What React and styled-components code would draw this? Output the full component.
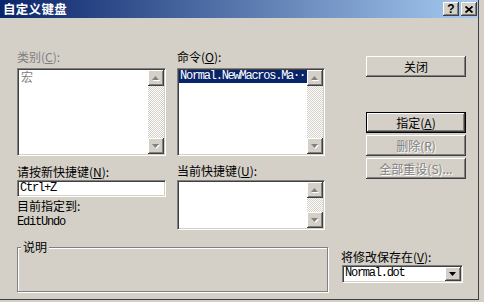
import React from "react";
import styled, { createGlobalStyle } from "styled-components";

const GlobalStyle = createGlobalStyle`
  html, body {
    margin: 0;
    padding: 0;
    background: #d4d0c8;
  }
  body {
    font-family: "Noto Sans CJK SC", "Liberation Sans", sans-serif;
    font-size: 12px;
    color: #000;
  }
`;

const Dialog = styled.div`
  width: 478px;
  height: 299px;
  background: #d4d0c8;
  border-right: 1px solid #404040;
  border-bottom: 1px solid #404040;
  display: flex;
  flex-direction: column;
  overflow: hidden;
`;

const TitleBar = styled.div`
  height: 18px;
  display: flex;
  align-items: center;
  padding: 0 1px 0 3px;
  background: linear-gradient(to right, #0a246a, #a6caf0);
`;

const Title = styled.div`
  flex: 1;
  color: #fff;
  font-weight: bold;
  font-size: 12.5px;
  letter-spacing: 0.3px;
  line-height: 18px;
`;

const CaptionButton = styled.div`
  width: 16px;
  height: 14px;
  margin-left: 2px;
  display: flex;
  align-items: center;
  justify-content: center;
  background: #d4d0c8;
  box-shadow: inset -1px -1px #404040, inset 1px 1px #fff, inset -2px -2px #808080;
  font: bold 12px "Liberation Sans", sans-serif;
  line-height: 14px;
`;

const Body = styled.div`
  flex: 1;
  display: flex;
  flex-direction: column;
  padding: 32px 0 0 17px;
`;

const Top = styled.div`
  display: flex;
  height: 180px;
`;

const Column = styled.div`
  width: ${(p) => p.$w}px;
  margin-right: ${(p) => p.$mr || 0}px;
  margin-left: ${(p) => p.$ml || 0}px;
  display: flex;
  flex-direction: column;
`;

const Label = styled.div`
  height: 14px;
  line-height: 14px;
  white-space: nowrap;
  margin-top: ${(p) => p.$mt || 0}px;
  color: ${(p) => (p.$disabled ? "#808080" : "#000")};
`;

const Mono = styled.div`
  font-family: "Liberation Mono", monospace;
  font-size: 12px;
  letter-spacing: -1.2px;
  line-height: ${(p) => p.$lh || 14}px;
  margin-top: ${(p) => p.$mt || 0}px;
  padding-left: ${(p) => p.$pl || 0}px;
  white-space: nowrap;
`;

const Sunken = styled.div`
  box-sizing: border-box;
  width: ${(p) => (p.$w ? `${p.$w}px` : "auto")};
  height: ${(p) => p.$h}px;
  margin-top: ${(p) => p.$mt || 0}px;
  margin-left: ${(p) => p.$ml || 0}px;
  border: 1px solid;
  border-color: #808080 #fff #fff #808080;
  padding: 1px;
  box-shadow: inset 1px 1px #404040, inset -1px -1px #d4d0c8;
  background: #fff;
  display: flex;
`;

const Items = styled.div`
  flex: 1;
  min-width: 0;
  display: flex;
  flex-direction: column;
`;

const Item = styled.div`
  min-height: ${(p) => (p.$mono ? 13 : 14)}px;
  line-height: ${(p) => (p.$mono ? 13 : 14)}px;
  padding: 0 ${(p) => (p.$mono ? "0 0 1px" : "2px")};
  white-space: nowrap;
  color: ${(p) => (p.$selected ? "#fff" : p.$disabled ? "#808080" : "#000")};
  background: ${(p) => (p.$selected ? "#0a246a" : "transparent")};
  font-family: ${(p) =>
    p.$mono ? `"Liberation Mono", monospace` : `"Noto Sans CJK SC", sans-serif`};
  font-size: 12px;
  letter-spacing: ${(p) => (p.$mono ? "-1.25px" : "0")};
`;

const Scroll = styled.div`
  width: 16px;
  display: flex;
  flex-direction: column;
`;

const ScrollBtn = styled.div`
  width: 16px;
  height: 16px;
  flex-shrink: 0;
  display: flex;
  align-items: center;
  justify-content: center;
  background: #d4d0c8;
  box-shadow: inset -1px -1px #404040, inset 1px 1px #fff, inset -2px -2px #808080;
`;

const Track = styled.div`
  flex: 1;
  background-color: #fff;
  background-image: conic-gradient(#d4d0c8 25%, #fff 0 50%, #d4d0c8 0 75%, #fff 0);
  background-size: 2px 2px;
`;

const Button = styled.div`
  box-sizing: border-box;
  width: 100px;
  height: 21px;
  margin-top: ${(p) => p.$mt || 0}px;
  display: flex;
  align-items: center;
  justify-content: center;
  background: #d4d0c8;
  border: ${(p) => (p.$default ? "1px solid #000" : "none")};
  box-shadow: ${(p) =>
    p.$default
      ? "inset -1px -1px #404040, inset 1px 1px #fff, inset -2px -2px #808080"
      : "inset -1px -1px #404040, inset 1px 1px #fff, inset -2px -2px #808080, inset 2px 2px #d4d0c8"};
  color: ${(p) => (p.$disabled ? "#808080" : "#000")};
  text-shadow: ${(p) => (p.$disabled ? "1px 1px #fff" : "none")};
  white-space: nowrap;
  line-height: 14px;
`;

const Bottom = styled.div`
  display: flex;
`;

const Group = styled.fieldset`
  box-sizing: border-box;
  width: 311px;
  margin: 10px 0 0 0;
  padding: 0;
  min-width: 0;
  border: 1px solid #808080;
  box-shadow: 1px 1px #fff, inset 1px 1px #fff;
  legend {
    margin-left: 3px;
    padding: 0 2px;
    line-height: 14px;
    background: #d4d0c8;
  }
`;

const GroupContent = styled.div`
  height: 37px;
`;

const SaveColumn = styled.div`
  margin-left: 13px;
  padding-top: 20px;
  display: flex;
  flex-direction: column;
`;

const DropBtn = styled(ScrollBtn)`
  height: 14px;
`;

function Arrow({ up, disabled }) {
  const pts = up ? "3.5,0 7,4 0,4" : "0,0 7,0 3.5,4";
  return (
    <svg width="8" height="5" viewBox="0 0 8 5">
      {disabled && <polygon points={pts} fill="#fff" transform="translate(1,1)" />}
      <polygon points={pts} fill={disabled ? "#808080" : "#000"} />
    </svg>
  );
}

function ScrollBar() {
  return (
    <Scroll>
      <ScrollBtn>
        <Arrow up disabled />
      </ScrollBtn>
      <Track />
      <ScrollBtn>
        <Arrow disabled />
      </ScrollBtn>
    </Scroll>
  );
}

export default function App() {
  return (
    <>
      <GlobalStyle />
      <Dialog>
        <TitleBar>
          <Title>自定义键盘</Title>
          <CaptionButton>?</CaptionButton>
          <CaptionButton>
            <svg width="8" height="7" viewBox="0 0 8 7">
              <path d="M0.5 0.5 L7.5 6.5 M7.5 0.5 L0.5 6.5" stroke="#000" strokeWidth="1.8" />
            </svg>
          </CaptionButton>
        </TitleBar>
        <Body>
          <Top>
            <Column $w={149} $mr={11}>
              <Label $disabled>类别(<u>C</u>):</Label>
              <Sunken $h={88} $mt={4}>
                <Items>
                  <Item $disabled>宏</Item>
                </Items>
                <ScrollBar />
              </Sunken>
              <Label $mt={9}>请按新快捷键(<u>N</u>):</Label>
              <Sunken $h={17} $mt={1}>
                <Mono $lh={13} $pl={1}>Ctrl+Z</Mono>
              </Sunken>
              <Label $mt={2}>目前指定到:</Label>
              <Mono $mt={2}>EditUndo</Mono>
            </Column>
            <Column $w={148}>
              <Label>命令(<u>O</u>):</Label>
              <Sunken $h={88} $mt={4}>
                <Items>
                  <Item $mono $selected>Normal.NewMacros.Ma···</Item>
                </Items>
                <ScrollBar />
              </Sunken>
              <Label $mt={8}>当前快捷键(<u>U</u>):</Label>
              <Sunken $h={50} $mt={2}>
                <Items />
                <ScrollBar />
              </Sunken>
            </Column>
            <Column $w={100} $ml={41}>
              <Button $mt={6}>关闭</Button>
              <Button $mt={35} $default>
                指定(<u>A</u>)
              </Button>
              <Button $mt={2} $disabled>
                删除(R)
              </Button>
              <Button $mt={2} $disabled>
                全部重设(S)...
              </Button>
            </Column>
          </Top>
          <Bottom>
            <Group>
              <legend>说明</legend>
              <GroupContent />
            </Group>
            <SaveColumn>
              <Label>将修改保存在(<u>V</u>):</Label>
              <Sunken $w={121} $h={18} $mt={1} $ml={1}>
                <Items>
                  <Item $mono>Normal.dot</Item>
                </Items>
                <DropBtn>
                  <Arrow />
                </DropBtn>
              </Sunken>
            </SaveColumn>
          </Bottom>
        </Body>
      </Dialog>
    </>
  );
}
